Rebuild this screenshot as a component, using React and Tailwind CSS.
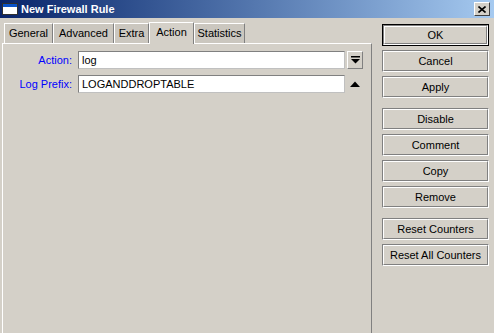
const font = { fontFamily: '"Liberation Sans", Arial, sans-serif' };

function WinIcon() {
  return (
    <div className="w-[16px] h-[12px] border border-[#303030] bg-white flex flex-col">
      <div className="h-[3px] bg-[#0a52c8]" />
    </div>
  );
}

function CloseButton() {
  return (
    <div className="w-[16px] h-[14px] bg-[#d4d0c8] border border-t-white border-l-white border-b-[#404040] border-r-[#404040] flex items-center justify-center">
      <svg width="8" height="7" viewBox="0 0 8 7">
        <path d="M0.5 0.5 L7.5 6.5 M7.5 0.5 L0.5 6.5" stroke="#000" strokeWidth="1.6" />
      </svg>
    </div>
  );
}

function Tab({ label, active, width }) {
  if (active) {
    return (
      <div
        className="h-[22px] bg-[#d4d0c8] border-t border-l border-t-white border-l-white border-r border-r-[#808080] -mb-px relative z-10 flex items-center justify-center text-[11px] text-black"
        style={{ width }}
      >
        <span className="-mt-[2px]">{label}</span>
      </div>
    );
  }
  return (
    <div
      className="h-[20px] bg-[#cbc7bf] border-t border-l border-t-white border-l-white border-r border-r-[#808080] flex items-center justify-center text-[11px] text-black"
      style={{ width }}
    >
      {label}
    </div>
  );
}

function Button({ label, isDefault, className = "" }) {
  const inner = (
    <div className="h-full w-full border border-t-[#808080] border-l-[#808080] border-b-white border-r-white">
      <div className="h-full w-full border border-t-white border-l-white border-b-[#808080] border-r-[#808080] flex items-center justify-center text-[11px] text-black">
        {label}
      </div>
    </div>
  );
  return (
    <div className={`h-[22px] w-[107px] ${isDefault ? "border border-black" : ""} ${className}`}>
      {inner}
    </div>
  );
}

export default function App() {
  return (
    <div className="w-[494px] h-[333px] bg-[#d4d0c8] overflow-hidden flex flex-col" style={font}>
      {/* title bar */}
      <div className="h-[18px] bg-gradient-to-r from-[#0a246a] to-[#a6caf0] flex items-center pl-[2px] pr-[4px]">
        <WinIcon />
        <span className="ml-[3px] text-white font-bold text-[11px] leading-none">New Firewall Rule</span>
        <div className="ml-auto">
          <CloseButton />
        </div>
      </div>

      <div className="flex flex-1">
        {/* left: tabs + panel */}
        <div className="w-[372px] pl-[2px] flex flex-col">
          <div className="flex items-end pt-[3px] pl-[2px] h-[25px]">
            <Tab label="General" width={49} />
            <Tab label="Advanced" width={61} />
            <Tab label="Extra" width={35} />
            <Tab label="Action" width={45} active />
            <Tab label="Statistics" width={51} />
          </div>
          <div className="flex-1 border-t border-l border-t-white border-l-white border-r border-r-[#808080] pt-[7px] flex flex-col gap-[6px]">
            <div className="flex items-center h-[18px]">
              <div className="w-[69px] text-right text-[11px] text-[#0000ff]">Action:</div>
              <div className="ml-[6px] w-[267px] h-[18px] bg-white border border-t-[#808080] border-l-[#808080] border-b-[#c0c0c0] border-r-[#c0c0c0] flex items-center pl-[3px] text-[11px]">
                log
              </div>
              <div className="ml-[2px] w-[16px] h-[18px] border border-t-white border-l-white border-b-[#808080] border-r-[#808080] flex items-center justify-center">
                <svg width="9" height="8" viewBox="0 0 9 8">
                  <rect x="0" y="0" width="9" height="1.5" fill="#000" />
                  <path d="M0 3 H9 L4.5 7.5 Z" fill="#000" />
                </svg>
              </div>
            </div>
            <div className="flex items-center h-[18px]">
              <div className="w-[69px] text-right text-[11px] text-[#0000ff]">Log Prefix:</div>
              <div className="ml-[6px] w-[267px] h-[18px] bg-white border border-t-[#808080] border-l-[#808080] border-b-[#c0c0c0] border-r-[#c0c0c0] flex items-center pl-[3px] text-[11px]">
                LOGANDDROPTABLE
              </div>
              <div className="ml-[2px] w-[16px] h-[18px] flex items-center justify-center">
                <svg width="10" height="6" viewBox="0 0 10 6">
                  <path d="M0 6 L5 0.5 L10 6 Z" fill="#000" />
                </svg>
              </div>
            </div>
          </div>
        </div>

        {/* right: buttons */}
        <div className="pl-[10px] pt-[6px] flex flex-col gap-[4px]">
          <Button label="OK" isDefault />
          <Button label="Cancel" />
          <Button label="Apply" />
          <Button label="Disable" className="mt-[6px]" />
          <Button label="Comment" />
          <Button label="Copy" />
          <Button label="Remove" />
          <Button label="Reset Counters" className="mt-[6px]" />
          <Button label="Reset All Counters" />
        </div>
      </div>
    </div>
  );
}
